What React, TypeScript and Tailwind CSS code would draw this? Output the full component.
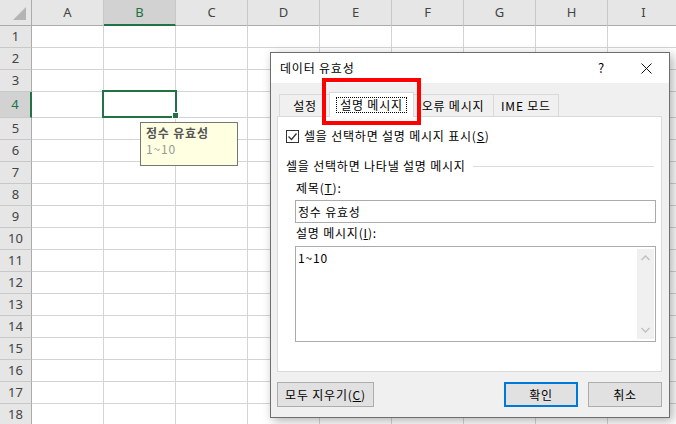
import React from 'react';

const COLS = ['A', 'B', 'C', 'D', 'E', 'F', 'G', 'H', 'I'];
const ROWS = Array.from({ length: 18 }, (_, i) => i + 1);

const Sheet: React.FC = () => (
  <div className="flex flex-col font-['Noto_Sans','Liberation_Sans',sans-serif] text-[13px] text-[#444]">
    <div className="flex h-[26px] shrink-0">
      <div className="relative w-[32px] h-full shrink-0 bg-[#e6e6e6] border-r border-b border-[#ababab]">
        <svg width="14" height="14" className="absolute right-[4px] bottom-[4px]">
          <polygon points="13,0 13,13 0,13" fill="#b4b4b4" />
        </svg>
      </div>
      {COLS.map(c => (
        <div
          key={c}
          className={`w-[72px] h-full shrink-0 flex items-center justify-center border-r border-[#c8c8c8] ${c === 'B' ? 'bg-[#d2d2d2] border-b-2 border-b-[#217346] text-[#217346] pt-[1px]' : 'bg-[#e6e6e6] border-b border-b-[#ababab]'}`}
        >
          {c}
        </div>
      ))}
    </div>
    {ROWS.map(r => (
      <div key={r} className={`flex shrink-0 ${r === 4 ? 'h-[26px]' : 'h-[22px]'}`}>
        <div
          className={`w-[32px] h-full shrink-0 flex items-center justify-center border-b border-[#c8c8c8] ${r === 4 ? 'bg-[#d2d2d2] border-r-2 border-r-[#217346] text-[#217346]' : 'bg-[#e6e6e6] border-r border-r-[#ababab]'}`}
        >
          {r}
        </div>
        {COLS.map(c => (
          <div key={c} className="w-[72px] h-full shrink-0 bg-white border-r border-b border-[#d4d4d4]" />
        ))}
      </div>
    ))}
  </div>
);

const Tab: React.FC<{ label: string; className: string; active?: boolean }> = ({ label, className, active }) => (
  <div
    className={`relative flex items-center justify-center border-t border-l border-r border-[#d9d9d9] shrink-0 ${active ? 'bg-white h-[25px] -mb-px z-10' : 'bg-[#f0f0f0] h-[22px]'} ${className}`}
  >
    {active ? (
      <span className="px-[3px] h-[16px] flex items-center border border-dotted border-black leading-none">{label}</span>
    ) : (
      <span className="leading-none">{label}</span>
    )}
  </div>
);

const Dialog: React.FC = () => (
  <div className="absolute left-[270px] top-[52px] w-[400px] h-[366px] border border-[#6e6e6e] bg-[#f0f0f0] shadow-[3px_3px_10px_rgba(0,0,0,0.3)] flex flex-col text-[12px] tracking-[0.8px] text-black font-['Noto_Sans_CJK_KR','Noto_Sans',sans-serif]">
    <div className="h-[30px] bg-white flex items-center pl-[9px] shrink-0">
      <span>데이터 유효성</span>
      <span className="ml-auto mr-[36px] text-[13px]">?</span>
      <svg width="11" height="11" className="mr-[17px]">
        <path d="M0.5 0.5 L10.5 10.5 M10.5 0.5 L0.5 10.5" stroke="#111" strokeWidth="1" />
      </svg>
    </div>

    <div className="flex-1 flex flex-col pl-[6px] pr-[7px] pt-[9px]">
      <div className="relative z-10 flex items-end h-[24px]">
        <Tab label="설정" className="ml-[2px] w-[52px]" />
        <Tab label="설명 메시지" className="-ml-[2px] w-[85px]" active />
        <Tab label="오류 메시지" className="-ml-[2px] w-[82px]" />
        <Tab label="IME 모드" className="-ml-px w-[66px]" />
      </div>

      <div className="h-[256px] border border-[#d9d9d9] bg-white flex flex-col shrink-0">
        <div className="mt-[11px] h-[16px] flex items-center pl-[8px]">
          <div className="w-[13px] h-[13px] border border-[#333] bg-white flex items-center justify-center">
            <svg width="11" height="11">
              <polyline points="1.5,5.5 4.5,8.5 9.5,2.5" fill="none" stroke="#333" strokeWidth="1.3" />
            </svg>
          </div>
          <span className="ml-[5px]">
            셀을 선택하면 설명 메시지 표시(<span className="underline">S</span>)
          </span>
        </div>

        <div className="mt-[14px] h-[16px] flex items-center pl-[8px] pr-[7px]">
          <span>셀을 선택하면 나타낼 설명 메시지</span>
          <div className="flex-1 h-px bg-[#dcdcdc] ml-[7px]" />
        </div>

        <div className="mt-[6px] h-[16px] flex items-center pl-[18px]">
          제목(<span className="underline">T</span>):
        </div>
        <div className="mt-[4px] h-[23px] ml-[17px] mr-[5px] border border-[#ababab] flex items-center pl-[2px]">
          정수 유효성
        </div>

        <div className="mt-[2px] h-[16px] flex items-center pl-[18px]">
          설명 메시지(<span className="underline">I</span>):
        </div>
        <div className="mt-[5px] h-[96px] ml-[17px] mr-[5px] border border-[#ababab] flex py-[2px] pr-px">
          <div className="flex-1 pl-[2px] pt-[1px] leading-[16px]">1~10</div>
          <div className="w-[17px] bg-[#f0f0f0] flex flex-col items-center justify-between py-[6px]">
            <svg width="9" height="6">
              <polyline points="0.5,5 4.5,1 8.5,5" fill="none" stroke="#c2c2c2" strokeWidth="1.5" />
            </svg>
            <svg width="9" height="6">
              <polyline points="0.5,1 4.5,5 8.5,1" fill="none" stroke="#c2c2c2" strokeWidth="1.5" />
            </svg>
          </div>
        </div>
      </div>

      <div className="mt-[10px] flex h-[25px]">
        <button className="w-[97px] h-full bg-[#e1e1e1] border border-[#adadad] flex items-center justify-center">
          모두 지우기(<span className="underline">C</span>)
        </button>
        <button className="ml-auto w-[74px] h-full bg-[#e1e1e1] border-2 border-[#0078d7] flex items-center justify-center">
          확인
        </button>
        <button className="ml-[10px] w-[74px] h-full bg-[#e1e1e1] border border-[#adadad] flex items-center justify-center">
          취소
        </button>
      </div>
    </div>
  </div>
);

export default function App() {
  return (
    <div className="relative w-[676px] h-[424px] overflow-hidden bg-white">
      <Sheet />

      {/* selected cell B4 */}
      <div className="absolute left-[102px] top-[90px] w-[75px] h-[28px] border-2 border-[#217346]" />
      <div className="absolute left-[172px] top-[112px] w-[7px] h-[7px] bg-[#217346] border border-white" />

      {/* input message tooltip */}
      <div className="absolute left-[140px] top-[122px] w-[98px] h-[44px] border border-[#767676] bg-[#ffffe1] pl-[5px] pt-[2px] text-[12px] leading-[16px] tracking-[0.8px] font-['Noto_Sans_CJK_KR','Noto_Sans',sans-serif]">
        <div className="font-bold text-[#555]">정수 유효성</div>
        <div className="text-[#999]">1~10</div>
      </div>

      <Dialog />

      {/* red highlight */}
      <div className="absolute left-[322px] top-[78px] w-[99px] h-[47px] border-4 border-[#ff0000] z-20" />
    </div>
  );
}
